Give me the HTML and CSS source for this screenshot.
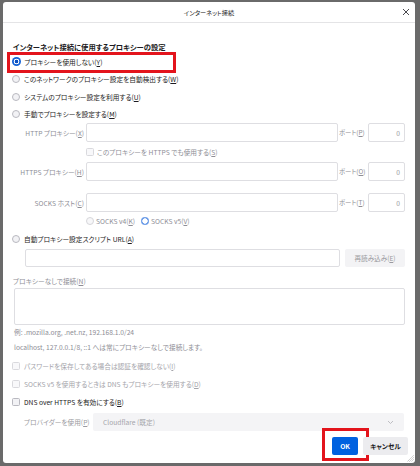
FILE: index.html
```html
<!DOCTYPE html>
<html lang="ja">
<head>
    <meta charset="UTF-8">
    <meta name="viewport" content="width=device-width, initial-scale=1.0">
    <title>インターネット接続</title>
    <link rel="stylesheet" href="styles.css">
</head>
<body>
    <div class="dialog">
        <div class="titlebar">
            <span></span>
            <span class="title">インターネット接続</span>
            <span class="close">
                <svg width="8" height="8" viewBox="0 0 8 8"><path d="M1 1L7 7M7 1L1 7" stroke="#4a4a4f" stroke-width="1" fill="none"/></svg>
            </span>
        </div>

        <div class="content">
            <div class="heading">インターネット接続に使用するプロキシーの設定</div>

            <div class="opt marked">
                <span class="radio on"></span>プロキシーを使用しない(<u>Y</u>)
                <span class="mark mark-none"></span>
            </div>
            <div class="opt"><span class="radio"></span>このネットワークのプロキシー設定を自動検出する(<u>W</u>)</div>
            <div class="opt"><span class="radio"></span>システムのプロキシー設定を利用する(<u>U</u>)</div>
            <div class="opt"><span class="radio"></span>手動でプロキシーを設定する(<u>M</u>)</div>

            <div class="manual">
                <div class="proxy-row">
                    <span class="proxy-label">HTTP プロキシー(<u>X</u>)</span>
                    <span class="field"></span>
                    <span class="port-label">ポート(<u>P</u>)</span>
                    <span class="port">0</span>
                </div>
                <div class="sub-row"><span class="check dis"></span>このプロキシーを HTTPS でも使用する(<u>S</u>)</div>
                <div class="proxy-row">
                    <span class="proxy-label">HTTPS プロキシー(<u>H</u>)</span>
                    <span class="field"></span>
                    <span class="port-label">ポート(<u>O</u>)</span>
                    <span class="port">0</span>
                </div>
                <div class="proxy-row socks">
                    <span class="proxy-label">SOCKS ホスト(<u>C</u>)</span>
                    <span class="field"></span>
                    <span class="port-label">ポート(<u>T</u>)</span>
                    <span class="port">0</span>
                </div>
                <div class="sub-row versions">
                    <span class="radio dis"></span>SOCKS v4(<u>K</u>)
                    <span class="radio on dis-on v5"></span>SOCKS v5(<u>V</u>)
                </div>
            </div>

            <div class="opt auto"><span class="radio"></span>自動プロキシー設定スクリプト URL(<u>A</u>)</div>
            <div class="url-row">
                <span class="field url"></span>
                <span class="reload">再読み込み(<u>E</u>)</span>
            </div>

            <div class="noproxy-label">プロキシーなしで接続(<u>N</u>)</div>
            <div class="textarea"></div>
            <div class="hint">例: .mozilla.org, .net.nz, 192.168.1.0/24</div>
            <div class="hint">localhost, 127.0.0.1/8, ::1 へは常にプロキシーなしで接続します。</div>

            <div class="checks">
                <div class="chk muted"><span class="check dis"></span>パスワードを保存してある場合は認証を確認しない(<u>I</u>)</div>
                <div class="chk muted"><span class="check dis"></span>SOCKS v5 を使用するときは DNS もプロキシーを使用する(<u>D</u>)</div>
                <div class="chk"><span class="check"></span>DNS over HTTPS を有効にする(<u>B</u>)</div>
            </div>

            <div class="provider-row">
                <span class="provider-label">プロバイダーを使用(<u>P</u>)</span>
                <span class="select">
                    Cloudflare (既定)
                    <svg width="7" height="5" viewBox="0 0 7 5"><path d="M1 1L3.5 3.5L6 1" stroke="#b8b8bd" stroke-width="0.9" fill="none"/></svg>
                </span>
            </div>
        </div>

        <div class="footer">
            <span class="btn ok">OK<span class="mark mark-ok"></span></span>
            <span class="btn cancel">キャンセル</span>
        </div>

        <svg class="grip" width="7" height="7" viewBox="0 0 7 7">
            <path d="M6.5 0.5L0.5 6.5M6.5 2.5L2.5 6.5M6.5 4.5L4.5 6.5" stroke="#9a9a9a" stroke-width="0.8" stroke-dasharray="1 0.6" fill="none"/>
        </svg>
    </div>
</body>
</html>
```

FILE: styles.css
```css
* { box-sizing: border-box; }
body {
    margin: 0;
    width: 420px;
    height: 466px;
    overflow: hidden;
    background: #6a6a6a;
    font-family: "Noto Sans CJK JP", "Noto Sans", sans-serif;
    font-size: 6.7px;
    font-feature-settings: "palt";
    color: #1c1b22;
}
u { text-underline-offset: 1px; }

.dialog {
    position: relative;
    margin: 2px 0 0 3px;
    width: 412px;
    height: 461px;
    background: #fff;
    border-radius: 3px;
    display: flex;
    flex-direction: column;
}
.titlebar {
    height: 21px;
    border-bottom: 1px solid #e4e4e6;
    display: grid;
    grid-template-columns: 1fr auto 1fr;
    align-items: center;
}
.title { font-size: 6.2px; color: #222; }
.close { justify-self: end; margin-right: 5px; display: flex; }

.content { padding: 0 10px 0 9px; flex: 1; }
.heading {
    margin: 18px 0 0 1px;
    height: 12px;
    line-height: 12px;
    font-weight: bold;
    font-size: 7.3px;
}

.opt {
    height: 17.5px;
    display: flex;
    align-items: center;
    position: relative;
}
.radio {
    width: 8px;
    height: 8px;
    border-radius: 50%;
    border: 1px solid #b9b9c0;
    background: #f2f2f5;
    margin-right: 4px;
    flex: none;
}
.radio.on {
    border: none;
    background: radial-gradient(circle, #0b4fc0 0 1.6px, #fff 2.1px 2.6px, #1563d6 3.1px);
    width: 9px;
    height: 9px;
    margin-left: -0.5px;
}
.radio.dis { border-color: #d6d6da; background: #f7f7f9; }
.radio.dis-on {
    background: radial-gradient(circle, #fff 0 2.4px, #6f9ee8 2.9px);
}

.mark {
    position: absolute;
    border: 3px solid #e3141c;
    pointer-events: none;
}
.mark-none { left: -5px; top: -1px; width: 169px; height: 21px; }

.manual { color: #8e8e96; }
.proxy-row {
    height: 19px;
    display: flex;
    align-items: stretch;
}
.proxy-row.socks { margin-top: 12px; }
.proxy-label {
    width: 74px;
    padding-right: 2px;
    text-align: right;
    display: flex;
    align-items: center;
    justify-content: flex-end;
}
.field {
    flex: 1;
    border: 1px solid #dedee2;
    border-radius: 2px;
    background: #fff;
}
.port-label {
    width: 30px;
    padding-left: 1px;
    display: flex;
    align-items: center;
    font-size: 6.4px;
}
.port {
    width: 37px;
    border: 1px solid #dedee2;
    border-radius: 2px;
    display: flex;
    align-items: center;
    justify-content: flex-end;
    padding-right: 4px;
    color: #9a9aa0;
}
.sub-row {
    height: 20px;
    padding-left: 74px;
    display: flex;
    align-items: center;
}
.sub-row .check { margin-right: 3px; }
.versions { height: 18px; }
.versions .radio { margin-right: 2px; }
.versions .v5 { margin-left: 6px; width: 8px; height: 8px; }

.check {
    width: 8px;
    height: 8px;
    border: 1px solid #b9b9c0;
    border-radius: 1.5px;
    background: #f2f2f5;
    flex: none;
}
.check.dis { border-color: #d9d9dd; background: #f8f8fa; }

.opt.auto { height: 18px; }
.url-row {
    margin-top: 1px;
    height: 18px;
    display: flex;
    padding-left: 13px;
    gap: 5px;
}
.reload {
    width: 60px;
    background: #f3f3f5;
    border-radius: 2px;
    color: #9a9aa0;
    display: flex;
    align-items: center;
    justify-content: center;
    font-size: 6.6px;
}

.noproxy-label {
    margin: 8px 0 0 1px;
    height: 13px;
    line-height: 13px;
    color: #8e8e96;
}
.textarea {
    margin-left: 2px;
    height: 37px;
    border: 1px solid #dedee2;
    border-radius: 2px;
}
.hint {
    margin-left: 2px;
    height: 15px;
    line-height: 15px;
    color: #8e8e96;
}

.checks { margin-top: 2px; }
.chk {
    height: 18px;
    display: flex;
    align-items: center;
}
.chk .check { margin-right: 4px; }
.chk.muted { color: #a4a4aa; }

.provider-row {
    margin-top: 2px;
    height: 18px;
    display: flex;
    padding-left: 12px;
}
.provider-label {
    width: 69px;
    display: flex;
    align-items: center;
    color: #9a9aa0;
}
.select {
    flex: 1;
    margin-right: 1px;
    background: #f4f4f6;
    border-radius: 2px;
    display: flex;
    align-items: center;
    justify-content: space-between;
    padding: 0 10px 0 10px;
    color: #a4a4aa;
}

.footer {
    height: 31px;
    display: flex;
    justify-content: flex-end;
    align-items: flex-start;
    gap: 5px;
    padding: 5px 7px 0 0;
}
.btn {
    height: 18px;
    border-radius: 2px;
    display: flex;
    align-items: center;
    justify-content: center;
    font-weight: bold;
    position: relative;
}
.ok { width: 26px; background: #0061e0; color: #fff; }
.cancel { width: 45px; background: #ececef; color: #1c1b22; }
.mark-ok { left: -10px; top: -9px; width: 47px; height: 33px; }

.grip { position: absolute; right: 1px; bottom: 1px; }
```
